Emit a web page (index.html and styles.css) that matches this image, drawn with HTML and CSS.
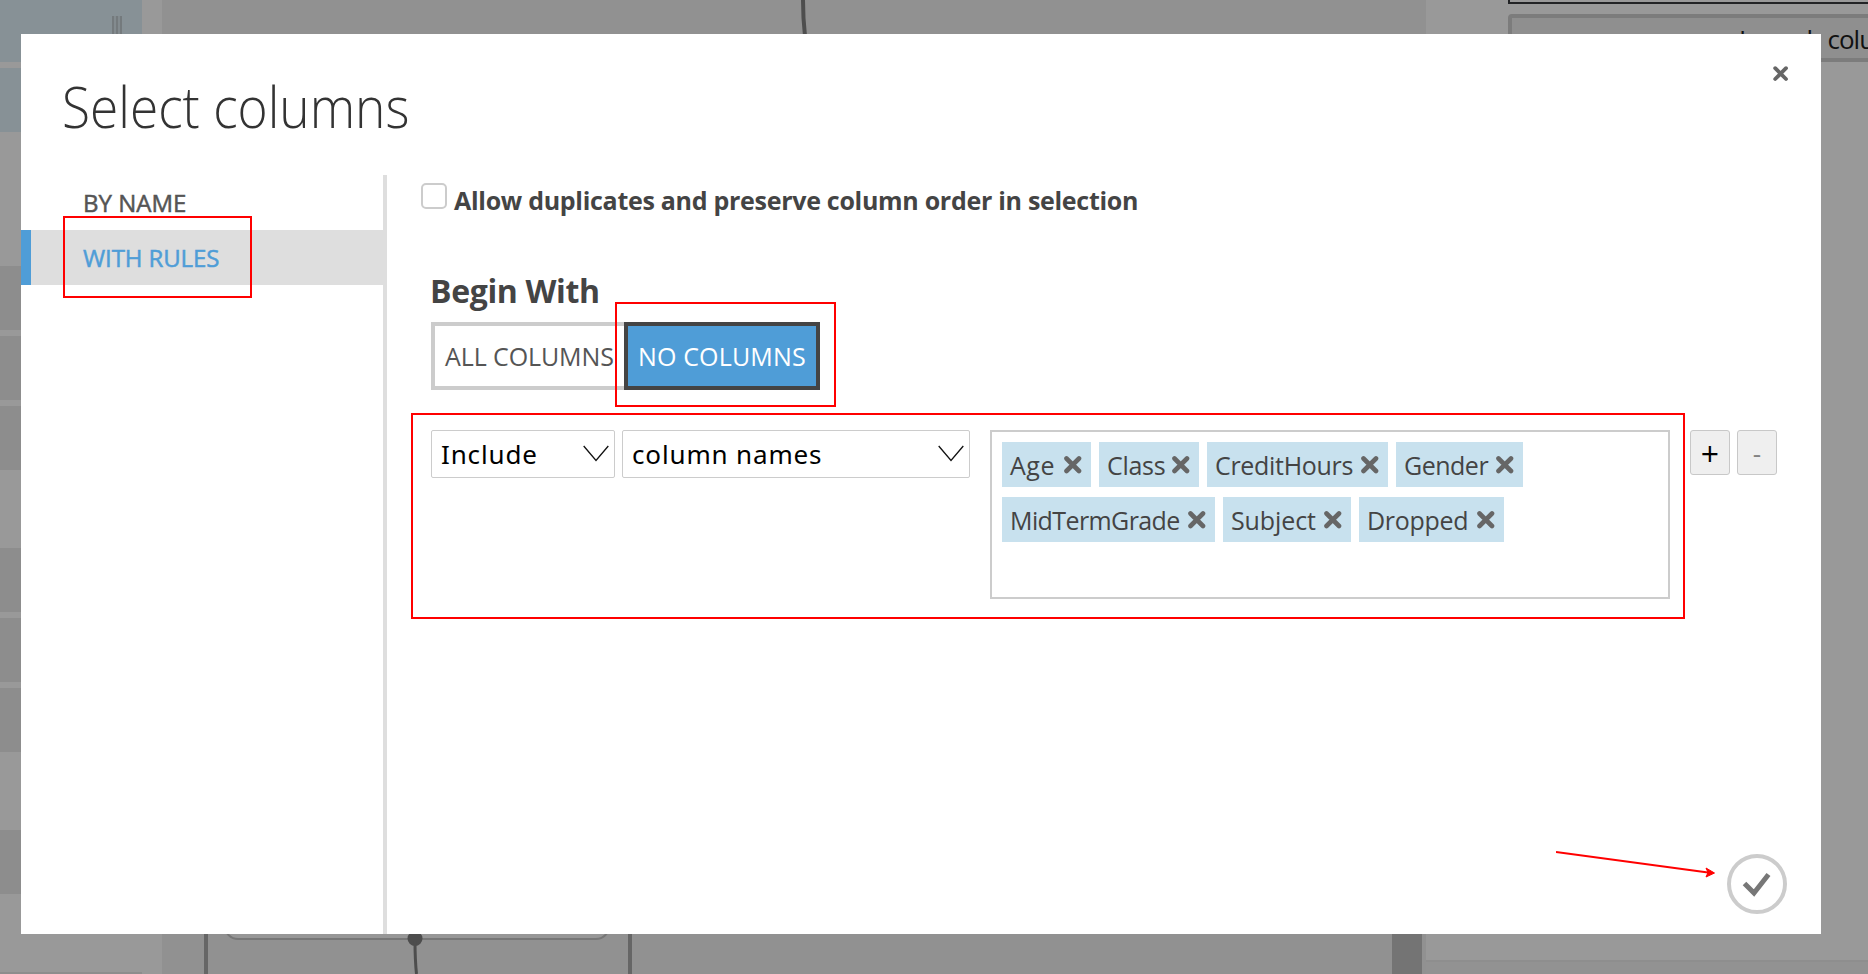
FILE: index.html
```html
<!DOCTYPE html>
<html lang="en">
<head>
<meta charset="utf-8">
<title>Select columns</title>
<link rel="stylesheet" href="styles.css">
</head>
<body>
<div class="workspace">
  <aside class="palette">
    <div class="item active first"><span class="grip"></span></div>
    <div class="item active second"></div>
    <div class="group g1"><div class="item"></div><div class="item"></div><div class="item"></div></div>
    <div class="group g2"><div class="item"></div><div class="item"></div><div class="item"></div></div>
    <div class="group g3"><div class="item"></div></div>
    <div class="palette-end"></div>
  </aside>
  <main class="canvas">
    <svg class="graph" width="1264" height="974" viewBox="162 0 1264 974">
      <path d="M803 0Q803 18 805 36" fill="none" stroke="#4e4e4e" stroke-width="4"/>
      <path d="M206 900V974M630 900V974" stroke="#666" stroke-width="4"/>
      <rect x="225" y="860" width="384" height="79" rx="13" fill="#979797" stroke="#777" stroke-width="2"/>
      <circle cx="415" cy="938.500" r="7.500" fill="#4d4d4d"/>
      <path d="M415 940Q415 960 416.500 974" fill="none" stroke="#4d4d4d" stroke-width="3"/>
      <path d="M1392 900H1422V974H1392Z" fill="#747474"/>
    </svg>
  </main>
  <aside class="properties">
    <div class="field"></div>
    <div class="launch">Launch column selector</div>
    <div class="help"></div>
  </aside>
</div>

<section class="dialog">
  <button class="close"><svg width="16" height="16" viewBox="0 0 16 16"><path d="M2.200 2.200L13 13M13 2.200L2.200 13"/></svg></button>
  <h1><span>Select columns</span></h1>
  <div class="columns">
    <nav>
      <a>BY NAME</a>
      <a class="selected">WITH RULES</a>
    </nav>
    <div class="content">
      <label class="dup"><i class="box"></i><span>Allow duplicates and preserve column order in selection</span></label>
      <h2>Begin With</h2>
      <div class="toggle"><button class="all">ALL COLUMNS</button><button class="none">NO COLUMNS</button></div>
      <div class="rule">
        <div class="select action">Include<svg width="26" height="17" viewBox="0 0 26 17"><path d="M.7 1L13 15.500L25.300 1"/></svg></div>
        <div class="select kind">column names<svg width="26" height="17" viewBox="0 0 26 17"><path d="M.7 1L13 15.500L25.300 1"/></svg></div>
        <div class="chips">
          <span class="chip age">Age<svg viewBox="0 0 18 18"><path d="M2.500 2.500L15 15M15 2.500L2.500 15"/></svg></span>
          <span class="chip class">Class<svg viewBox="0 0 18 18"><path d="M2.500 2.500L15 15M15 2.500L2.500 15"/></svg></span>
          <span class="chip credit">CreditHours<svg viewBox="0 0 18 18"><path d="M2.500 2.500L15 15M15 2.500L2.500 15"/></svg></span>
          <span class="chip gender">Gender<svg viewBox="0 0 18 18"><path d="M2.500 2.500L15 15M15 2.500L2.500 15"/></svg></span>
          <span class="chip grade">MidTermGrade<svg viewBox="0 0 18 18"><path d="M2.500 2.500L15 15M15 2.500L2.500 15"/></svg></span>
          <span class="chip subject">Subject<svg viewBox="0 0 18 18"><path d="M2.500 2.500L15 15M15 2.500L2.500 15"/></svg></span>
          <span class="chip dropped">Dropped<svg viewBox="0 0 18 18"><path d="M2.500 2.500L15 15M15 2.500L2.500 15"/></svg></span>
        </div>
        <button class="step plus">+</button>
        <button class="step minus">-</button>
      </div>
    </div>
  </div>
  <button class="ok"><svg width="60" height="60" viewBox="0 0 60 60"><circle cx="30" cy="30" r="28"/><path d="M17.500 29.500L27 39L41.500 20.500"/></svg></button>
</section>

<div class="mark mark-tab"></div>
<div class="mark mark-none"></div>
<div class="mark mark-rule"></div>
<svg class="arrow" width="162" height="30" viewBox="0 0 162 30"><path d="M0 2L152 22.500" fill="none" stroke="#f00" stroke-width="2"/><path d="M150 18L158.500 23L150 27L152 22.500Z" fill="#f00" stroke="#f00"/></svg>
</body>
</html>
```
FILE: styles.css
```css
* { box-sizing: border-box; }
body { margin: 0; width: 1868px; height: 974px; position: relative; overflow: hidden; font-family: "Open Sans", "Noto Sans", sans-serif; color: #444; }
button { margin: 0; padding: 0; background: none; border: 0; border-radius: 0; font: inherit; color: inherit; }
h1, h2 { margin: 0; }

.workspace { display: flex; height: 974px; background: #999; }
.palette { width: 162px; flex: none; }
.item { width: 142px; height: 64px; background: #8d8d8d; }
.item.active { background: #879196; }
.item.first { height: 62px; padding: 16px 20px 0 0; display: flex; justify-content: flex-end; }
.item.second { margin-top: 6px; }
.grip { width: 10px; height: 40px; background: repeating-linear-gradient(90deg, #747a7d 0 2px, #838b8f 2px 4px); }
.group { display: grid; gap: 6px; }
.g1 { margin-top: 134px; }
.g2 { margin-top: 78px; }
.g3 { margin-top: 78px; }
.palette-end { margin-top: 78px; width: 142px; height: 2px; background: #8d8d8d; }
.canvas { width: 1264px; flex: none; background: #919191; }
.graph { display: block; }
.properties { flex: 1; padding: 0 0 0 82px; overflow: hidden; background: #999; display: flex; flex-direction: column; }
.field { flex: none; width: 380px; height: 4px; border-left: 2px solid #222325; border-bottom: 2px solid #222325; }
.launch { flex: none; width: 692px; margin-top: 10px; height: 48px; border: 4px solid #7c7c7c; border-radius: 4px; background: #8f8f8f; color: #111; font-size: 26px; line-height: 43px; padding-left: 227px; letter-spacing: -.95px; white-space: nowrap; }
.help { margin: auto 0 0 -82px; width: 600px; height: 14px; background: #929292; border-top: 2px solid #8e8e8e; }

.dialog { position: absolute; left: 21px; top: 34px; width: 1800px; height: 900px; background: #fff; }
.close { position: absolute; left: 1752px; top: 32px; width: 16px; height: 16px; }
.close svg { display: block; stroke: #666; stroke-width: 3.8; stroke-linecap: round; }
h1 { height: 141px; padding: 33px 0 0 41px; font-weight: 300; font-size: 57px; line-height: 78px; color: #333; }
h1 span { display: inline-block; transform: scaleX(.902); transform-origin: 0 0; white-space: nowrap; }
.columns { display: flex; height: 759px; }
nav { width: 366px; flex: none; border-right: 4px solid #dedede; display: flex; flex-direction: column; }
nav a { height: 55px; line-height: 56px; padding-left: 62px; font-size: 24px; font-weight: 500; color: #555; -webkit-text-stroke: .5px currentColor; }
nav .selected { background: #dedede; border-left: 10px solid #4f9dd7; padding-left: 52px; color: #4f9dd7; letter-spacing: -.1px; }
.content { padding: 8px 0 0 34px; width: 1434px; }
.dup { display: flex; gap: 7px; height: 50px; }
.box { width: 26px; height: 26px; border: 2px solid #ccc; border-radius: 5px; }
.dup span { font-size: 25px; line-height: 34px; font-weight: 700; letter-spacing: -.29px; white-space: nowrap; }
h2 { padding-left: 9px; height: 89px; padding-top: 36px; font-size: 32px; line-height: 44px; letter-spacing: -.35px; }
.toggle { display: flex; margin-left: 10px; height: 68px; }
.toggle button { height: 68px; border: 4px solid #ccc; font-size: 25px; color: #555; white-space: nowrap; line-height: 60px; text-align: left; }
.all { width: 193px; padding-left: 10px; }
.toggle .all { border-right: 0; letter-spacing: -.1px; }
.none { width: 196px; padding-left: 10px; }
.toggle .none { border-color: #444; background: #4f9dd7; color: #fff; letter-spacing: .15px; }
.rule { margin: 40px 0 0 10px; display: flex; align-items: flex-start; }
.select { height: 48px; border: 1px solid #ccc; border-radius: 2px; display: flex; align-items: center; justify-content: space-between; padding: 0 5px 0 9px; font: 26px "Noto Sans", sans-serif; letter-spacing: .85px; color: #000; white-space: nowrap; }
.select svg { fill: none; stroke: #111; stroke-width: 1.3; margin-bottom: 1px; }
.action { width: 184px; margin-right: 7px; }
.kind { width: 348px; margin-right: 20px; }
.chips { width: 680px; height: 169px; border: 2px solid #ccc; padding: 10px; display: flex; flex-wrap: wrap; align-content: flex-start; gap: 10px 8px; margin-right: 20px; }
.chip { height: 45px; background: #c8e1ee; padding: 0 9px 0 8px; font-size: 25px; line-height: 47px; letter-spacing: -.1px; display: flex; justify-content: space-between; white-space: nowrap; }
.chip svg { width: 18px; height: 18px; margin-top: 14px; stroke: #666; stroke-width: 4.6; stroke-linecap: round; flex: none; }
.chip.age { width: 89px; letter-spacing: .5px; }
.chip.class { width: 100px; letter-spacing: -.3px; }
.chip.credit { width: 181px; letter-spacing: -.3px; }
.chip.gender { width: 127px; letter-spacing: -.5px; }
.chip.grade { width: 213px; letter-spacing: -.6px; }
.chip.subject { width: 128px; }
.chip.dropped { width: 145px; letter-spacing: -.3px; }
.step { width: 40px; height: 45px; background: #efefef; border: 1px solid #c8c8c8; border-radius: 3px; font-size: 26px; line-height: 42px; color: #000; text-align: center; }
.plus { margin-right: 7px; font: 32px/46px "Open Sans", sans-serif; }
.minus { color: #838383; }
.ok { position: absolute; left: 1706px; top: 820px; width: 60px; height: 60px; }
.ok svg { display: block; fill: none; stroke: #ccc; stroke-width: 4; }
.ok path { stroke: #777; stroke-width: 5; }

.mark { position: absolute; border: 2px solid #f00; }
.mark-tab { left: 63px; top: 216px; width: 189px; height: 82px; }
.mark-none { left: 615px; top: 302px; width: 221px; height: 105px; }
.mark-rule { left: 411px; top: 413px; width: 1274px; height: 206px; }
.arrow { position: absolute; left: 1556px; top: 850px; }
```
